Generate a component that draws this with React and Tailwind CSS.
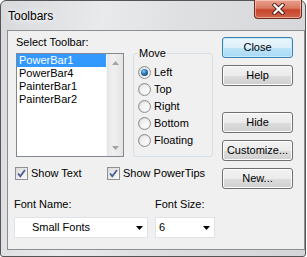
import React from 'react'

const toolbars = ['PowerBar1', 'PowerBar4', 'PainterBar1', 'PainterBar2']
const moves = ['Left', 'Top', 'Right', 'Bottom', 'Floating']

function Radio({ checked }) {
  return (
    <span className="flex h-[13px] w-[13px] shrink-0 items-center justify-center rounded-full border border-[#8e8f8f] bg-[linear-gradient(135deg,#cfcfcf,#f7f7f7)]">
      <span className="flex h-[9px] w-[9px] items-center justify-center rounded-full bg-[linear-gradient(135deg,#e9e9e9,#ffffff)]">
        {checked && (
          <span className="h-[7px] w-[7px] rounded-full bg-[radial-gradient(circle_at_40%_35%,#7fd0f7_0%,#2a6fb0_45%,#0b2f5c_100%)]" />
        )}
      </span>
    </span>
  )
}

function Checkbox() {
  return (
    <span className="flex h-[13px] w-[13px] shrink-0 items-center justify-center border border-[#8e8f8f] bg-[linear-gradient(135deg,#dadada,#fbfbfb)]">
      <svg width="11" height="11" viewBox="0 0 11 11">
        <path d="M2 5.5 L4.3 8.2 L9 2" fill="none" stroke="#4a5f96" strokeWidth="1.8" />
      </svg>
    </span>
  )
}

function Button({ children, primary }) {
  return (
    <div
      className={
        'flex h-[21px] w-[71px] items-center justify-center rounded-[3px] border text-[11px] text-black ' +
        (primary
          ? 'border-[#3c7fb1] bg-[linear-gradient(#ecf7fd_0%,#dcf0fb_50%,#bfe4f9_51%,#a7d9f5_100%)] shadow-[inset_0_0_0_1px_#c6ecfc]'
          : 'border-[#707070] bg-[linear-gradient(#f2f2f2_0%,#ebebeb_50%,#dddddd_51%,#cfcfcf_100%)] shadow-[inset_0_0_0_1px_#fcfcfc]')
      }
    >
      {children}
    </div>
  )
}

function Combo({ width, text, textPad }) {
  return (
    <div className={`flex h-[21px] items-center border border-[#dfe3e8] bg-white ${width}`}>
      <span className={`flex-1 ${textPad}`}>{text}</span>
      <svg width="7" height="4" viewBox="0 0 7 4" className="mr-[4px]">
        <polygon points="0,0 7,0 3.5,4" fill="#000" />
      </svg>
    </div>
  )
}

export default function App() {
  return (
    <div className="h-[257px] w-[307px] bg-white font-['Liberation_Sans',Arial,sans-serif] text-[11px] leading-[13px] text-black">
      <div className="flex h-[257px] w-[306px] flex-col rounded-t-[6px] rounded-b-[3px] border border-[#555] bg-[linear-gradient(100deg,#d7d9dc_0%,#e9eaec_30%,#dedfe1_55%,#d3d5d8_100%)]">
        {/* title bar */}
        <div className="flex h-[29px] shrink-0 items-start">
          <span className="mt-[8px] pl-[7px] text-[12px] leading-[14px] [text-shadow:0_0_6px_#fff,0_0_10px_#fff]">Toolbars</span>
          <div className="ml-auto mr-[3px] -mt-[1px] flex h-[19px] w-[48px] items-center justify-center rounded-b-[4px] border border-t-0 border-[#6e2a1e] bg-[linear-gradient(#e9a28f_0%,#d87a62_45%,#c7452c_55%,#d0654a_100%)] shadow-[inset_0_0_0_1px_rgba(255,220,210,0.55)]">
            <svg width="13" height="12" viewBox="0 0 13 12">
              <path d="M2.5 2 L10.5 10 M10.5 2 L2.5 10" stroke="#4a1d14" strokeWidth="4" strokeLinecap="square" />
              <path d="M2.5 2 L10.5 10 M10.5 2 L2.5 10" stroke="#fff" strokeWidth="2.2" strokeLinecap="square" />
            </svg>
          </div>
        </div>

        {/* client area */}
        <div className="ml-[6px] flex h-[220px] shrink-0 border border-[#8e8e8e] bg-[#f0f0f0]">
          <div className="flex w-[214px] flex-col pl-[6px]">
            <div className="flex">
              <div className="ml-[2px] flex flex-col pt-[5px]">
                <span className="h-[13px]">Select Toolbar:</span>
                <div className="mt-[4px] flex h-[104px] w-[108px] border border-[#828790] bg-white">
                  <div className="flex flex-1 flex-col">
                    {toolbars.map((t, i) => (
                      <div
                        key={t}
                        className={'h-[13px] pl-[2px] ' + (i === 0 ? 'bg-[#3399ff] text-white' : '')}
                      >
                        {t}
                      </div>
                    ))}
                  </div>
                  <div className="flex w-[17px] flex-col justify-between border-l border-[#f8f8f8] bg-[linear-gradient(90deg,#e6e6e6,#f0f0f0_40%,#e4e4e4)]">
                    <div className="flex h-[17px] items-center justify-center">
                      <svg width="7" height="4" viewBox="0 0 7 4">
                        <polygon points="0,4 7,4 3.5,0" fill="#a3a3a3" />
                      </svg>
                    </div>
                    <div className="flex h-[17px] items-center justify-center">
                      <svg width="7" height="4" viewBox="0 0 7 4">
                        <polygon points="0,0 7,0 3.5,4" fill="#a3a3a3" />
                      </svg>
                    </div>
                  </div>
                </div>
              </div>

              <fieldset className="ml-[9px] mt-[16px] h-[110px] w-[80px] rounded-[3px] border border-[#d5dfe5] pl-[4px] pt-[4px]">
                <legend className="px-[1px]">Move</legend>
                {moves.map((m, i) => (
                  <div key={m} className="flex h-[17px] items-center gap-[3px]">
                    <Radio checked={i === 0} />
                    <span>{m}</span>
                  </div>
                ))}
              </fieldset>
            </div>

            <div className="ml-[1px] mt-[10px] flex h-[13px] items-center">
              <div className="flex w-[92px] items-center gap-[3px]">
                <Checkbox />
                <span>Show Text</span>
              </div>
              <div className="flex items-center gap-[3px]">
                <Checkbox />
                <span>Show PowerTips</span>
              </div>
            </div>

            <div className="mt-[18px] flex gap-[7px]">
              <div className="flex w-[134px] flex-col gap-[6px]">
                <span>Font Name:</span>
                <Combo width="w-[134px]" text="Small Fonts" textPad="pl-[17px]" />
              </div>
              <div className="flex w-[60px] flex-col gap-[6px]">
                <span>Font Size:</span>
                <Combo width="w-[60px]" text="6" textPad="pl-[3px]" />
              </div>
            </div>
          </div>

          <div className="flex w-[71px] flex-col pt-[6px]">
            <Button primary>Close</Button>
            <div className="mt-[7px]">
              <Button>Help</Button>
            </div>
            <div className="mt-[26px] flex flex-col gap-[7px]">
              <Button>Hide</Button>
              <Button>Customize...</Button>
              <Button>New...</Button>
            </div>
          </div>
        </div>
      </div>
    </div>
  )
}
